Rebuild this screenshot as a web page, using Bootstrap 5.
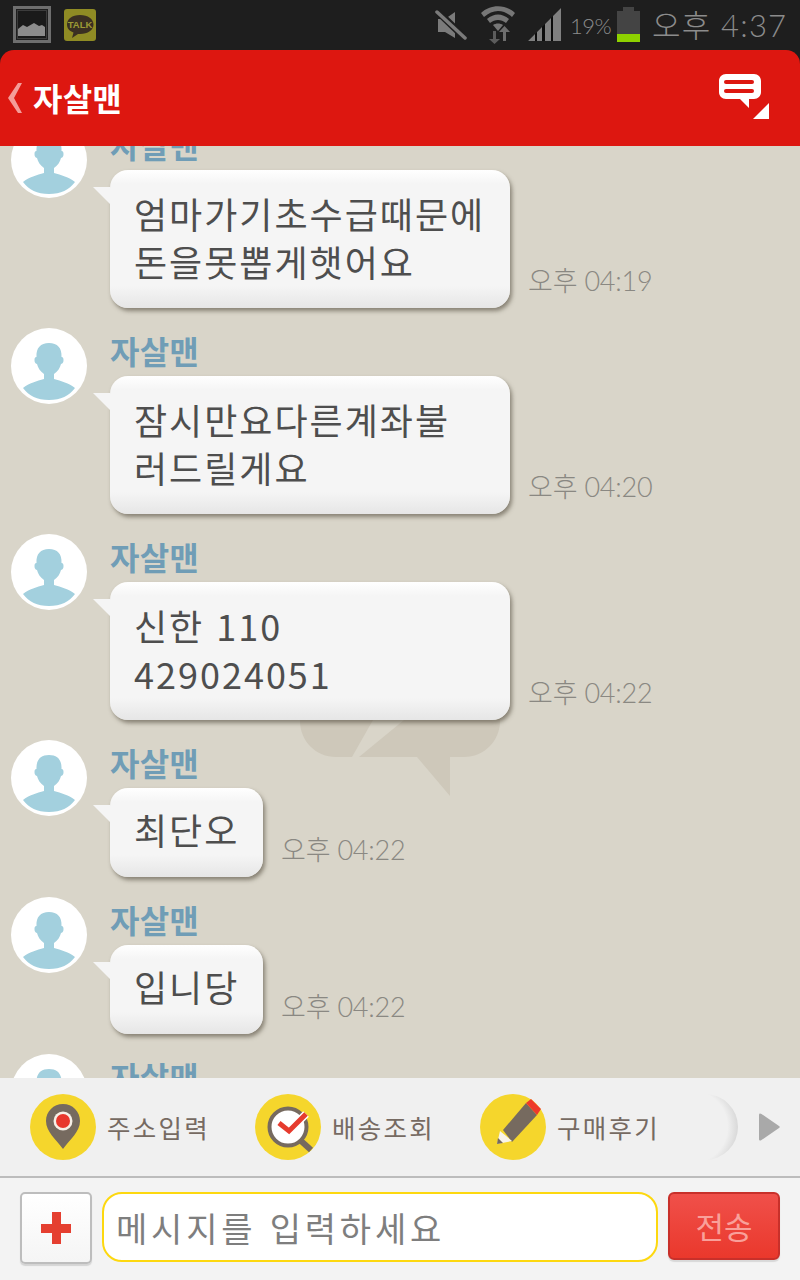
<!DOCTYPE html>
<html lang="ko">
<head>
  <meta charset="UTF-8" />
  <meta name="viewport" content="width=device-width, initial-scale=1" />
  <title>자살맨</title>
  <link href="https://cdn.jsdelivr.net/npm/bootstrap@5.3.2/dist/css/bootstrap.min.css" rel="stylesheet" />
  <style>
    html, body { height: 1280px; overflow: hidden; }
    body { width: 800px; font-family: "Noto Sans CJK KR", "Noto Sans", sans-serif; background: #1e1e1e; }

    .status-strip { height: 50px; background: #1e1e1e; color: #8c8c8c; }
    .status-icon-gallery { margin-left: 13px; }
    .status-icon-talk { margin-left: 13px; }
    .status-icon-wifi { margin-left: 14px; }
    .status-icon-signal { margin-left: 13px; }
    .status-icon-battery { margin-left: -1px; }
    .status-pct { font-size: 22px; margin-left: 9px; width: 48px; letter-spacing: -.5px; font-family: "Lato", "Noto Sans CJK KR", sans-serif; font-weight: 300; }
    .status-clock { font-size: 31px; margin-left: 12px; margin-right: 13px; width: 135px; white-space: nowrap; letter-spacing: 1.2px; font-family: "Lato", "Noto Sans CJK KR", sans-serif; font-weight: 300; }

    .top-bar { height: 96px; background: #dd1710; border-radius: 14px 14px 0 0; color: #fff; }
    .top-back { margin-left: 8px; }
    .top-title { font-size: 32px; font-weight: 700; line-height: 1; margin-left: 11px; margin-top: -2px; letter-spacing: .2px; }
    .top-chat { margin-right: 29px; margin-top: -2px; }

    .chat-area { height: 932px; background: #d9d5c9; overflow: hidden; position: relative; }
    .chat-mark { position: absolute; left: 300px; top: 454px; }
    .chat-scroll { position: relative; margin-top: -24px; padding-left: 11px; }
    .msg-row { margin-bottom: 20px; gap: 23px; }
    .msg-face { width: 76px; height: 76px; flex: none; }
    .msg-name { height: 48px; line-height: 44px; font-size: 32px; font-weight: 700; color: #709db6; letter-spacing: .2px; }
    .msg-bubble { position: relative; padding: 19px 24px 23px; font-size: 36px; line-height: 48px; letter-spacing: 2px; color: #4e4e4e; border-radius: 18px;
      background: linear-gradient(to bottom, #fff 0, #f5f5f5 14px, #f5f5f5 calc(100% - 22px), #e6e6e6 100%);
      box-shadow: 2px 3px 4px rgba(70, 62, 48, .55); }
    .msg-bubble.wide { width: 400px; }
    .msg-bubble.short { width: 153px; height: 89px; padding: 17px 0 15px 24px; }
    .msg-bubble::before { content: ""; position: absolute; left: -17px; top: 17px; border-right: 17px solid #f5f5f5; border-bottom: 17px solid transparent; }
    .msg-time { font-size: 27px; line-height: 1; color: #8a8882; margin-left: 18px; margin-bottom: 14px; white-space: nowrap; letter-spacing: -.2px; font-family: "Lato", "Noto Sans CJK KR", sans-serif; font-weight: 300; }

    .quick-bar { height: 98px; background: #f0f0f0; padding-left: 30px; }
    .quick-item { width: 225px; gap: 10px; }
    .quick-disc { width: 66px; height: 66px; flex: none; }
    .quick-label { font-size: 25.5px; color: #766a62; line-height: 1; white-space: nowrap; letter-spacing: 2.3px; padding-left: 1px; }
    .quick-fade { width: 33px; height: 66px; border-radius: 0 33px 33px 0 / 0 33px 33px 0; background: radial-gradient(circle 48px at -14px 50%, rgba(214,214,214,0) 76%, #d6d6d6 100%); }
    .quick-next { margin-left: 20px; }

    .send-bar { height: 104px; background: #f3f3f3; border-top: 2px solid #bcbcbc; padding: 14px 20px 0; gap: 10px; }
    .plus-btn.btn { width: 72px; height: 72px; padding: 0; border: 2px solid #bdbdbd; border-radius: 5px; background: linear-gradient(to bottom, #fff, #f5f5f5); box-shadow: 0 2px 1px #d4d4d4; }
    .msg-input.form-control { width: 556px; height: 70px; border: 2px solid #fdd80f; border-radius: 20px; font-size: 34px; padding: 0 12px; color: #7e7e7e; letter-spacing: 3.8px; box-shadow: none; }
    .msg-input.form-control::placeholder { color: #7e7e7e; opacity: 1; }
    .send-btn.btn { width: 112px; height: 68px; padding: 0; border: 2px solid #c8302a; border-radius: 6px; font-size: 31px; color: #f9a09a; background: linear-gradient(to bottom, #f0504a, #ea382c); box-shadow: 0 2px 1px #d8d8d8; }
  </style>
</head>
<body>

  <svg width="0" height="0" class="position-absolute">
    <symbol id="face" viewBox="0 0 76 76">
      <circle cx="38" cy="38" r="38" fill="#fff" />
      <path d="M12 60c6-5 14-7 21-9v-5c-4-3-6-6-7-10-2-.5-2.500-2-2.500-4s.5-3 2-3c-.5-9 4-14 12.500-14s13 5 12.500 14c1.500 0 2 1 2 3s-.5 3.500-2.500 4c-1 4-3 7-7 10v5c7 2 15 4 21 9-6 8-14 12-26 12s-20-4-26-12z" fill="#a3d0de" />
    </symbol>
  </svg>

  <!-- Barra de estado -->
  <div class="status-strip d-flex align-items-center">
    <svg class="status-icon-gallery" width="38" height="38" viewBox="0 0 38 38">
      <rect x="1.500" y="1.500" width="35" height="34" fill="none" stroke="#6e6e6e" stroke-width="3" />
      <rect x="4.500" y="4.500" width="29" height="28" fill="#1a1a1a" stroke="#3c3c3c" />
      <path d="M5 30V23l5-4 4 2 7-4 5 3 3-1 3 2v9z" fill="#8c8c8c" />
    </svg>
    <svg class="status-icon-talk" width="32" height="32" viewBox="0 0 32 32">
      <rect width="32" height="32" rx="3" fill="#8f8b24" />
      <path d="M16 6c8 0 13.500 4 13.500 9.500S24 25 16 25l-2 0-6 4 1.500-5.500C5 22 3 19 3 15.500 3 10 8 6 16 6z" fill="#3a2f22" />
      <text x="16" y="19" text-anchor="middle" font-size="9.500" font-weight="700" fill="#9c9a35" font-family="Liberation Sans, sans-serif">TALK</text>
    </svg>
    <svg class="ms-auto" width="32" height="32" viewBox="0 0 32 32">
      <path d="M3 10h7l10-7v26l-10-6H3z" fill="#7b7b7b" />
      <path d="M2 2l28 27" stroke="#1e1e1e" stroke-width="7" />
      <path d="M2 3l28 26" stroke="#7b7b7b" stroke-width="3.500" stroke-linecap="round" />
    </svg>
    <svg class="status-icon-wifi" width="34" height="38" viewBox="0 0 34 38">
      <path d="M0 7C9-2 25-2 34 7l-3 4C22 3 12 3 3 11z" fill="#777" />
      <path d="M6 13c7-6 15-6 22 0l-3 4c-5-4-11-4-16 0z" fill="#777" />
      <path d="M12 19c3-2 7-2 10 0l-5 6z" fill="#777" />
      <path d="M12 38V30H8l5.500-5 5.500 5h-4v8z" fill="#5c5c5c" transform="rotate(180 13.500 31.500)" />
      <path d="M22 35V26h-4l5.500-6 5.500 6h-4v9z" fill="#6e6e6e" />
    </svg>
    <svg class="status-icon-signal" width="33" height="34" viewBox="0 0 33 34">
      <path d="M0 33L33 0v33z" fill="#0c0c0c" />
      <path d="M0 33l7-7v7zM9 33V24l5-5v14zM17 33V16l6-6v23zM25 33V8l8-8v33z" fill="#808080" />
    </svg>
    <div class="status-pct">19%</div>
    <svg class="status-icon-battery" width="23" height="36" viewBox="0 0 23 36">
      <rect x="6" y="0" width="11" height="4" fill="#444" />
      <rect x="0" y="4" width="23" height="24" fill="#444" />
      <rect x="0" y="27" width="23" height="8" fill="#8ed100" />
    </svg>
    <div class="status-clock">오후 4:37</div>
  </div>

  <!-- Cabecera -->
  <div class="top-bar d-flex align-items-center">
    <svg class="top-back" width="14" height="30" viewBox="0 0 14 30">
      <path d="M0 15L10 0h4L6 15l8 15h-4z" fill="#f49c98" />
    </svg>
    <div class="top-title">자살맨</div>
    <svg class="top-chat ms-auto" width="52" height="46" viewBox="0 0 52 46">
      <path d="M7 0h28c4 0 7 3 7 7v11c0 4-3 7-7 7h-5v9l-9-9H7c-4 0-7-3-7-7V7c0-4 3-7 7-7z" fill="#fff" />
      <rect x="5" y="6" width="30" height="4" rx="2" fill="#dd1710" />
      <rect x="5" y="15" width="30" height="4" rx="2" fill="#dd1710" />
      <path d="M34 45L50 29v16z" fill="#fff" />
    </svg>
  </div>

  <!-- Mensajes -->
  <div class="chat-area">
    <svg class="chat-mark" width="200" height="197" viewBox="0 0 200 197">
      <path d="M36 0h128c20 0 36 16 36 36v85c0 20-16 36-36 36h-14v39l-33-39H36c-20 0-36-16-36-36V36C0 16 16 0 36 0z" fill="#cec8ba" />
      <path d="M52 157h7l45-37H73z" fill="#d9d5c9" />
    </svg>
    <div class="chat-scroll">

      <div class="msg-row d-flex">
        <svg class="msg-face"><use href="#face" /></svg>
        <div>
          <div class="msg-name">자살맨</div>
          <div class="d-flex align-items-end">
            <div class="msg-bubble wide">엄마가기초수급때문에<br>돈을못뽑게햇어요</div>
            <div class="msg-time">오후 04:19</div>
          </div>
        </div>
      </div>

      <div class="msg-row d-flex">
        <svg class="msg-face"><use href="#face" /></svg>
        <div>
          <div class="msg-name">자살맨</div>
          <div class="d-flex align-items-end">
            <div class="msg-bubble wide">잠시만요다른계좌불<br>러드릴게요</div>
            <div class="msg-time">오후 04:20</div>
          </div>
        </div>
      </div>

      <div class="msg-row d-flex">
        <svg class="msg-face"><use href="#face" /></svg>
        <div>
          <div class="msg-name">자살맨</div>
          <div class="d-flex align-items-end">
            <div class="msg-bubble wide">신한 110<br>429024051</div>
            <div class="msg-time">오후 04:22</div>
          </div>
        </div>
      </div>

      <div class="msg-row d-flex">
        <svg class="msg-face"><use href="#face" /></svg>
        <div>
          <div class="msg-name">자살맨</div>
          <div class="d-flex align-items-end">
            <div class="msg-bubble short">최단오</div>
            <div class="msg-time">오후 04:22</div>
          </div>
        </div>
      </div>

      <div class="msg-row d-flex">
        <svg class="msg-face"><use href="#face" /></svg>
        <div>
          <div class="msg-name">자살맨</div>
          <div class="d-flex align-items-end">
            <div class="msg-bubble short">입니당</div>
            <div class="msg-time">오후 04:22</div>
          </div>
        </div>
      </div>

      <div class="msg-row d-flex">
        <svg class="msg-face"><use href="#face" /></svg>
        <div>
          <div class="msg-name">자살맨</div>
        </div>
      </div>

    </div>
  </div>

  <!-- Accesos rapidos -->
  <div class="quick-bar d-flex align-items-center">
    <div class="quick-item d-flex align-items-center">
      <svg class="quick-disc" viewBox="0 0 66 66">
        <circle cx="33" cy="33" r="33" fill="#f5d62c" />
        <path d="M33 10c9.500 0 17 7.500 17 17 0 11-10 18-17 28-7-10-17-17-17-28 0-9.500 7.500-17 17-17z" fill="#766a5f" />
        <circle cx="33" cy="27" r="9.500" fill="#f6efe6" />
        <circle cx="33" cy="27" r="7" fill="#e8372c" />
      </svg>
      <span class="quick-label">주소입력</span>
    </div>
    <div class="quick-item d-flex align-items-center">
      <svg class="quick-disc" viewBox="0 0 66 66">
        <circle cx="33" cy="33" r="33" fill="#f5d62c" />
        <path d="M45 46l11 10" stroke="#766a5f" stroke-width="6" />
        <circle cx="33" cy="33" r="18.500" fill="#fff" stroke="#766a5f" stroke-width="4" />
        <path d="M24 29l10 8 17-17" fill="none" stroke="#fff" stroke-width="8" />
        <path d="M24 29l10 8 17-17" fill="none" stroke="#e63b2e" stroke-width="5" />
      </svg>
      <span class="quick-label">배송조회</span>
    </div>
    <div class="quick-item d-flex align-items-center">
      <svg class="quick-disc" viewBox="0 0 66 66">
        <circle cx="33" cy="33" r="33" fill="#f5d62c" />
        <path d="M23 36L46 9l11 12-25 27z" fill="#766a5f" />
        <path d="M46 9l5-4 10 10-4 6z" fill="#ee3a2c" />
        <path d="M20 37l12 10-15 3z" fill="#f8f4ea" />
        <path d="M18 44l5 5-6 1z" fill="#766a5f" />
      </svg>
      <span class="quick-label">구매후기</span>
    </div>
    <div class="quick-fade"></div>
    <svg class="quick-next" width="22" height="28" viewBox="0 0 22 28">
      <path d="M1 2c0-1.500 1-2 2.500-1L21 13c1 .6 1 1.400 0 2L3.500 27C2 28 1 27.500 1 26z" fill="#a9a9a9" />
    </svg>
  </div>

  <!-- Envio -->
  <form class="send-bar d-flex align-items-start">
    <button type="button" class="plus-btn btn d-flex align-items-center justify-content-center">
      <svg width="30" height="32" viewBox="0 0 30 32"><path d="M11 0h9v12h10v9H20v11h-9V21H0v-9h11z" fill="#e53f30" /></svg>
    </button>
    <input type="text" class="msg-input form-control" placeholder="메시지를 입력하세요" />
    <button type="button" class="send-btn btn">전송</button>
  </form>

  <script src="https://cdn.jsdelivr.net/npm/bootstrap@5.3.2/dist/js/bootstrap.bundle.min.js"></script>
</body>
</html>
